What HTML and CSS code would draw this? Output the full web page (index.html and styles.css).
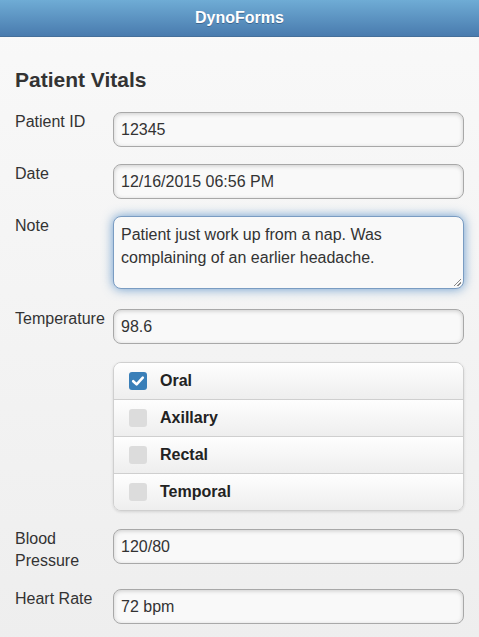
FILE: index.html
```html
<!DOCTYPE html>
<html>
<head>
<meta charset="utf-8">
<link rel="stylesheet" href="styles.css">
</head>
<body>
<div class="page">
  <header class="bar"><h1 class="bar-title">DynoForms</h1></header>
  <main class="content">
    <h2 class="form-title">Patient Vitals</h2>
    <div class="field">
      <label class="field-label">Patient ID</label>
      <div class="input">12345</div>
    </div>
    <div class="field">
      <label class="field-label">Date</label>
      <div class="input">12/16/2015 06:56 PM</div>
    </div>
    <div class="field field-note">
      <label class="field-label">Note</label>
      <div class="input textarea focus">Patient just work up from a nap. Was complaining of an earlier headache.<span class="grip"></span></div>
    </div>
    <div class="field field-mid">
      <label class="field-label">Temperature</label>
      <div class="input">98.6</div>
    </div>
    <div class="field field-mid">
      <span class="field-label"></span>
      <div class="checkgroup">
        <div class="check-item"><span class="box checked"><svg viewBox="0 0 18 18" width="18" height="18"><path d="M4.2 9.2 L7.6 12.4 L13.8 5.6" fill="none" stroke="#fff" stroke-width="2.6" stroke-linecap="round" stroke-linejoin="round"/></svg></span><span class="check-label">Oral</span></div>
        <div class="check-item"><span class="box"></span><span class="check-label">Axillary</span></div>
        <div class="check-item"><span class="box"></span><span class="check-label">Rectal</span></div>
        <div class="check-item"><span class="box"></span><span class="check-label">Temporal</span></div>
      </div>
    </div>
    <div class="field">
      <label class="field-label">Blood Pressure</label>
      <div class="input">120/80</div>
    </div>
    <div class="field">
      <label class="field-label">Heart Rate</label>
      <div class="input">72 bpm</div>
    </div>
  </main>
</div>
</body>
</html>
```
FILE: styles.css
```css
html, body {
  margin: 0;
  padding: 0;
}
body {
  font-family: "Liberation Sans", Arial, sans-serif;
  color: #333;
  background: linear-gradient(#f9f9f9, #eeeeee);
  min-height: 637px;
  overflow: hidden;
}
.bar {
  height: 36px;
  background: linear-gradient(#6facd5, #497bae);
  border-bottom: 1px solid #456f9a;
  display: flex;
  align-items: center;
  justify-content: center;
}
.bar-title {
  margin: 0;
  font-size: 16px;
  font-weight: bold;
  color: #fff;
  text-shadow: 0 1px 0 #3e6790;
}
.content {
  padding: 0 15px;
}
.form-title {
  margin: 0;
  padding-top: 30px;
  font-size: 21px;
  line-height: 26px;
  font-weight: bold;
  color: #333;
  height: 75px;
  box-sizing: border-box;
}
.field {
  display: flex;
  align-items: flex-start;
  margin-bottom: 17px;
}
.field-note {
  margin-bottom: 20px;
}
.field-mid {
  margin-bottom: 18px;
}
.field-label {
  width: 20%;
  font-size: 16px;
  line-height: 22px;
  margin-top: -1px;
  color: #333;
}
.input {
  margin-left: auto;
  width: 351px;
  box-sizing: border-box;
  height: 35px;
  border: 1px solid #a8a8a8;
  border-radius: 8px;
  background: #f9f9f9;
  box-shadow: inset 0 1px 4px rgba(0,0,0,0.18);
  font-size: 16px;
  line-height: 33px;
  padding: 0 7px;
  color: #333;
  white-space: nowrap;
}
.textarea {
  position: relative;
  height: 73px;
  white-space: normal;
  line-height: 23px;
  padding: 6px 7px 0;
}
.focus {
  border-color: #7a9cc2;
  box-shadow: 0 0 11px rgba(56,123,190,0.75);
}
.grip {
  position: absolute;
  right: 2px;
  bottom: 2px;
  width: 7px;
  height: 7px;
  background: linear-gradient(135deg, transparent 45%, #888 45%, #888 55%, transparent 55%, transparent 70%, #888 70%, #888 80%, transparent 80%);
}
.checkgroup {
  margin-left: auto;
  width: 351px;
  box-sizing: border-box;
  border: 1px solid #cfcfcf;
  border-radius: 8px;
  overflow: hidden;
  box-shadow: 0 1px 3px rgba(0,0,0,0.12);
}
.check-item {
  display: flex;
  align-items: center;
  height: 37px;
  box-sizing: border-box;
  background: linear-gradient(#fefefe, #eeeeee);
  border-top: 1px solid #cfcfcf;
  padding-left: 15px;
}
.check-item:first-child {
  border-top: none;
  height: 36px;
}
.box {
  width: 18px;
  height: 18px;
  border-radius: 3px;
  background: #dcdcdc;
  display: flex;
  margin-right: 13px;
}
.box.checked {
  background: #3a7fb8;
}
.check-label {
  font-size: 16px;
  font-weight: bold;
  color: #222;
}
```
